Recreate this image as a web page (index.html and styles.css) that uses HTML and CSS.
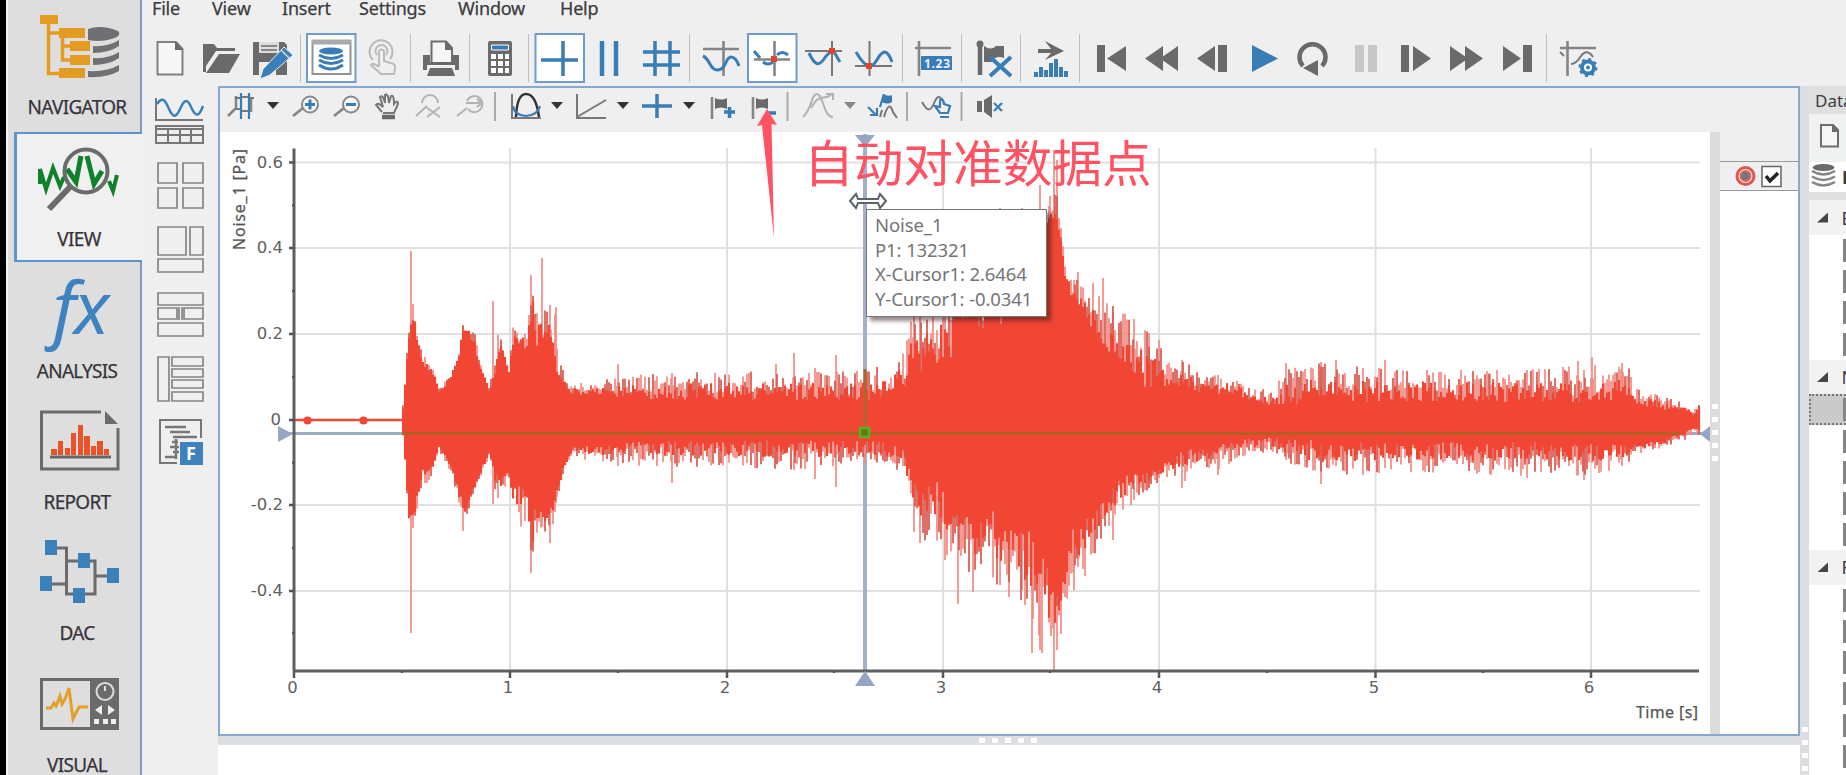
FILE: index.html
```html
<!DOCTYPE html>
<html lang="en">
<head>
<meta charset="utf-8">
<title>Signal viewer</title>
<link rel="stylesheet" href="styles.css">
</head>
<body>
<div class="app">
<nav class="sidebar">
  <div class="nav nav-first"><svg width="132" height="90" viewBox="8 0 132 90"><g fill="#e39b22"><path d="M40 15h18v9H40zM59 28h26v10H59zM70 41h20v10H70zM70 55h20v10H70zM59 68h26v10H59z"/></g><g fill="none" stroke="#e39b22" stroke-width="3.5"><path d="M48.500 20V73.500H60M48.500 33H60M62.500 36V60H72M62.500 46H72"/></g><path fill="#6f7073" d="M88 29Q102 24 118 31Q121 34 117 37Q103 43 88 40ZM93 46Q108 47 119 40V46Q109 53 93 53ZM93 58Q108 59 119 52V58Q109 65 93 65ZM88 71Q107 72 119 65V71Q107 78 88 77Z"/></svg><span class="nav-label">NAVIGATOR</span></div>
  <div class="nav nav-active"><svg width="124" height="88" viewBox="16 133 124 88"><path d="M41 183V168L47 188L54 167L61 185L65 176M110 180L114 190L118 174" fill="none" stroke="#10812b" stroke-width="4"/><path d="M68 168L77 181L82 155M88 155L95 183L103 170" fill="none" stroke="#10812b" stroke-width="5"/><circle cx="87" cy="170" r="21.500" fill="none" stroke="#6b6b6b" stroke-width="4"/><path d="M71 186L50 208" stroke="#6b6b6b" stroke-width="6"/></svg><span class="nav-label">VIEW</span></div>
  <div class="nav"><div class="fx">fx</div><span class="nav-label">ANALYSIS</span></div>
  <div class="nav"><svg width="132" height="91" viewBox="8 395 132 91"><path d="M101 413H41.500V470H118V429" fill="none" stroke="#6b6b6b" stroke-width="3"/><path d="M105 412L118 425H105Z" fill="#6b6b6b"/><path fill="#ec5129" d="M51 450h6v6h-6zM58 442h5v14h-5zM65 449h5v7h-5zM71 434h5v22h-5zM78 426h5v30h-5zM84 437h6v19h-6zM91 447h5v9h-5zM97 442h6v14h-6zM104 450h5v6h-5z"/><path d="M50 458H111" stroke="#666" stroke-width="3"/></svg><span class="nav-label">REPORT</span></div>
  <div class="nav"><svg width="132" height="91" viewBox="8 527 132 91"><g fill="none" stroke="#6b6b6b" stroke-width="3"><path d="M52 550H66.500V596H95V563H66M45 586H66M95 578H113"/></g><path fill="#3a80bb" d="M45 542h12v15H45zM40 578h12v15H40zM78 555h12v15H78zM73 590h12v15H73zM107 570h12v15h-12z"/></svg><span class="nav-label">DAC</span></div>
  <div class="nav"><svg width="132" height="91" viewBox="8 658 132 91"><rect x="41.500" y="680.500" width="76" height="49" fill="none" stroke="#6b6b6b" stroke-width="3"/><path d="M90 679h29v52H90z" fill="#6b6b6b"/><path d="M46 709H51L54 704L56 707L60 697L62 705L65 700L69 689L73 720L79 708H88" fill="none" stroke="#e3a02b" stroke-width="3"/><circle cx="105" cy="692.500" r="8.500" fill="none" stroke="#ddd" stroke-width="2"/><path d="M105 687V692" stroke="#ddd" stroke-width="2"/><path fill="#eee" d="M102 706v10l-7-5zM108 706v10l7-5zM94 720h5v5h-5zM103 720h5v5h-5zM111 720h5v5h-5z"/></svg><span class="nav-label">VISUAL</span></div>
</nav>
<main class="main">
  <header class="menu"><span class="m-file">File</span><span class="m-view">View</span><span class="m-insert">Insert</span><span class="m-settings">Settings</span><span class="m-window">Window</span><span>Help</span></header>
  <div class="toolbar">
    <svg width="50" height="54" viewBox="145 32 50 54"><path d="M157.500 42H176L182.500 49V74.500H157.500Z" class="l"/><path d="M175 41V50H183Z" class="d"/></svg>
    <svg width="50" height="54" viewBox="195 32 50 54"><path class="d" d="M203 44H214L217 48H235V51H216L206 66V72H203ZM219 54H240L229 73H206Z"/></svg>
    <svg width="55" height="54" viewBox="245 32 55 54"><path class="d" d="M253 42H284L287 45V75H253Z"/><path fill="#ddd" d="M259 42h20v11H259z"/><path d="M261 46H277M261 50H277" stroke="#888" stroke-width="2"/><path fill="#eee" d="M259 62h17v13h-17z"/><path fill="#3a7fb9" stroke="#eee" d="M284 47L293 55L270 75L260 79L263 69Z"/><path d="M281 50L289 58" stroke="#dde" stroke-width="1.500"/></svg>
    <i class="sep"></i>
    <svg width="60" height="54" viewBox="301 32 60 54"><rect x="307" y="34" width="48.500" height="48" class="box"/><rect x="312.500" y="41" width="38" height="33" fill="none" stroke="#929292" stroke-width="2"/><path d="M312 42H351" stroke="#aaa" stroke-width="5"/><ellipse cx="331" cy="51" rx="12" ry="3.500" fill="#397db7"/><path fill="none" stroke="#397db7" stroke-width="3" d="M319 55Q331 62 343 55M319 60Q331 67 343 60M319 65Q331 73 343 65"/></svg>
    <svg width="49" height="54" viewBox="361 32 49 54"><g fill="none" stroke="#bbb" stroke-width="2"><path d="M373 60A11.500 11.500 0 1 1 390 59M377 55A6 6 0 1 1 386 55M379 67V51Q381 48 384 51V61L394 64Q396 67 394 74H381L371 65Q373 62 379 67"/></g></svg>
    <i class="sep"></i>
    <svg width="58" height="54" viewBox="411 32 58 54"><path class="d" d="M423 55H430V62H452V55H459V70H455V65H427V70H423ZM430 68H452L455 76H427Z"/><path d="M431.500 62V41.500H446L452 48V62" class="l2"/><path d="M445 41V50H453Z" class="d"/></svg>
    <i class="sep"></i>
    <svg width="58" height="54" viewBox="470 32 58 54"><rect x="488" y="41" width="24" height="35" rx="2" class="d"/><path fill="#397db7" stroke="#fff" d="M491.500 45h17v5h-17z"/><path fill="#fff" d="M491 54h5v5h-5zM498 54h5v5h-5zM505 54h4v5h-4zM491 61h5v5h-5zM498 61h5v5h-5zM505 61h4v5h-4zM491 68h5v5h-5zM498 68h5v5h-5zM505 68h4v5h-4z"/></svg>
    <i class="sep"></i>
    <svg width="60" height="54" viewBox="529 32 60 54"><rect x="535.500" y="34" width="48.500" height="48" class="box"/><path class="b4" d="M541 60H578M563 41V76"/></svg>
    <svg width="41" height="54" viewBox="589 32 41 54"><path class="b5" d="M602 41V76M616 41V76"/></svg>
    <svg width="59" height="54" viewBox="630 32 59 54"><path class="b4" d="M655 41V76M670 41V76M643 52H680M643 65H680"/></svg>
    <i class="sep"></i>
    <svg width="55" height="54" viewBox="690 32 55 54"><path class="g3" d="M703 49H739M723.500 41V76"/><path class="b3" d="M703 56C710 59 710 70 717 70C727 70 725 57 731 57Q736 57 739 66"/></svg>
    <svg width="56" height="54" viewBox="745 32 56 54"><rect x="748" y="34" width="48.500" height="48" class="box"/><path class="g3" d="M754 59.500H790M774.500 41V76"/><path class="b3" d="M754 51L760 58M763 62Q768 66 773 62M777 55Q782 50 788 55"/><path d="M771 56h6v6h-6z" fill="#df442c"/></svg>
    <svg width="50" height="54" viewBox="801 32 50 54"><path class="g2" d="M805 51H842M832 41V76"/><path class="b3" d="M809 53C815 66 819 66 824 59C828 53 833 48 837 57L840 62"/><path d="M829 48h6v6h-6z" fill="#df442c"/></svg>
    <svg width="51" height="54" viewBox="851 32 51 54"><path class="g2" d="M855 66H892M869.500 41V76"/><path class="b3" d="M856 52Q864 66 870 66C877 66 878 52 885 52Q889 53 892 62"/><path d="M866 63h6v6h-6z" fill="#df442c"/></svg>
    <i class="sep"></i>
    <svg width="58" height="54" viewBox="903 32 58 54"><path class="g3" d="M915 48H951M919 41V76"/><path d="M921 56h31v14h-31z" fill="#397db7"/><text x="924" y="67.500" fill="#eef" font-size="12" font-weight="bold" textLength="26">1.23</text></svg>
    <i class="sep"></i>
    <svg width="58" height="54" viewBox="962 32 58 54"><path class="g4" d="M980 42V75"/><circle cx="980" cy="44" r="3.500" class="d"/><path class="d" d="M984 46Q991 51 996 46H1004V58Q995 55 992 62H984Z"/><path d="M990 57L1011 76M1011 57L990 76" stroke="#397db7" stroke-width="4"/></svg>
    <i class="sep"></i>
    <svg width="58" height="54" viewBox="1021 32 58 54"><path class="d" d="M1038 49H1051L1045 41L1064 51L1045 60L1051 53H1038Z"/><path class="b" d="M1034 72h4v5h-4zM1039 67h4v10h-4zM1044 70h4v7h-4zM1049 63h4v14h-4zM1054 59h4v18h-4zM1059 67h4v10h-4zM1064 71h4v6h-4z"/></svg>
    <i class="sep"></i>
    <svg width="55" height="54" viewBox="1080 32 55 54"><path class="d" d="M1097 45h8v27h-8zM1126 46v25l-19-12.500z"/></svg>
    <svg width="52" height="54" viewBox="1135 32 52 54"><path class="d" d="M1163 46v25l-18-12.500zM1178 46v25l-18-12.500z"/></svg>
    <svg width="51" height="54" viewBox="1187 32 51 54"><path class="d" d="M1215 46v25l-18-12.500zM1218 45h9v27h-9z"/></svg>
    <svg width="48" height="54" viewBox="1238 32 48 54"><path class="b" d="M1252 45v27l26-13.500z"/></svg>
    <svg width="54" height="54" viewBox="1286 32 54 54"><path class="g4" d="M1303 66A13 13 0 1 1 1322 66"/><path class="d" d="M1303 68L1318 60V76Z"/></svg>
    <svg width="47" height="54" viewBox="1340 32 47 54"><path fill="#c7c7c7" d="M1355 45h9v27h-9zM1368 45h9v27h-9z"/></svg>
    <svg width="51" height="54" viewBox="1387 32 51 54"><path class="d" d="M1401 45h8v27h-8zM1413 46v25l18-12.500z"/></svg>
    <svg width="54" height="54" viewBox="1438 32 54 54"><path class="d" d="M1450 46v25l18-12.500zM1465 46v25l18-12.500z"/></svg>
    <svg width="54" height="54" viewBox="1492 32 54 54"><path class="d" d="M1503 46v25l18-12.500zM1523 45h9v27h-9z"/></svg>
    <i class="sep"></i>
    <svg width="60" height="54" viewBox="1547 32 60 54"><path class="g3" d="M1560 48H1596M1567.500 41V76"/><path class="g2" d="M1560 52L1564 56M1571 64Q1576 64 1581 56Q1587 48 1593 57"/><circle cx="1588" cy="67.500" r="6" fill="#fff" stroke="#397db7" stroke-width="4"/><circle cx="1588" cy="67.500" r="8.500" fill="none" stroke="#397db7" stroke-width="2" stroke-dasharray="3 3.670"/><circle cx="1588" cy="67.500" r="2" class="b"/></svg>
  </div>
  <div class="work">
    <div class="rail">
      <svg width="76" height="390" viewBox="142 86 76 390"><path d="M156 98V120H203" class="g2"/><path d="M157 104C163 95 166 102 169 109C174 120 177 116 181 107C186 96 189 102 192 109C197 119 200 114 203 106" fill="none" stroke="#3a80ba" stroke-width="2.500"/><path class="g2" d="M156 126H203V143H156ZM156 129H203M156 135H203M168 129V143M180 129V143M191 129V143"/>
      <g fill="none" stroke="#858585" stroke-width="1.700"><path d="M158 163h19v20h-19zM183 163h20v20h-20zM158 188h19v20h-19zM183 188h20v20h-20zM158 227h28v28h-28zM190 227h13v28h-13zM158 259h45v13h-45zM158 293h45v12h-45zM158 308h19v11h-19zM184 308h19v11h-19zM158 323h45v13h-45zM158 357h11v44h-11zM172 357h31v9h-31zM172 369h31v8h-31zM172 380h31v8h-31zM172 392h31v9h-31zM179 307v13M182 307v13"/></g>
      <path d="M201 438V420H160V463H177" class="g2"/><path d="M165 427H186M170 432H190M173 437H197M172 442H178M170 447H179M173 452H179M165 457H177M176 439V459" stroke="#777" stroke-width="2.500"/><path d="M180 442h23v23h-23z" fill="#3d82bb"/><text x="186" y="460" fill="#fff" font-size="18" font-weight="bold">F</text></svg>
    </div>
    <section class="center">
      <div class="panel">
        <div class="chartbar">
          <svg width="784" height="44" viewBox="220 88 784 44">
            <path class="g3" d="M228 116L235 109M236 96V110M251 97V112"/><path class="b2" d="M241 93V119M249 93V119"/><path class="g2" d="M235 98H240M242 97H248M235 109H240M242 111H248M250 98H254"/>
            <g fill="#333"><path d="M267 102h12l-6 7zM551 102h12l-6 7zM617 102h12l-6 7zM683 102h12l-6 7z"/><path fill="#888" d="M844 102h12l-6 7z"/></g>
            <g class="z"><path class="g3" d="M293 116L303 108"/><circle cx="310" cy="104.500" r="8"/><path class="b3" d="M305 104.500H315M310 99.500V109.500"/><path class="g3" d="M334 116L344 108"/><circle cx="351" cy="104.500" r="8"/><path class="b3" d="M346 104.500H356"/></g>
            <path class="g2" d="M382 112L376 105Q378 102 383 107L380 97Q383 94 385 103V95Q388 92 389 103L391 96Q394 94 394 104Q398 99 398 104L394 113H383"/><path class="g4" d="M382 117H395"/>
            <g fill="none" stroke="#b3b3b3" stroke-width="2"><path d="M416 116L427 106M422 103A8 8 0 1 1 438 103M427 108L440 117M440 107L427 117M457 116L467 108M467 101A8 8 0 1 1 468 109M466 103H481M477 99L482 103L477 107"/></g>
            <path d="M495 92V121M787.500 92V121M907 92V121M961.500 92V121" stroke="#aaa" stroke-width="2"/>
            <path class="g2" d="M512 94V118H541"/><path d="M516 117Q517 94 526 94Q536 94 539 117" fill="none" stroke="#333" stroke-width="2.500"/><path class="b2" d="M513 106Q514 115 526 116Q538 115 540 106"/>
            <path class="g2" d="M577 94V118H606M577 117L606 100"/><path class="b4" d="M642 106H672M657 94V118"/>
            <path class="g3" d="M712 97V119M753 97V119"/><path class="d" d="M715 98Q721 101 727 98V109Q721 106 715 109zM756 98Q762 101 768 98V109Q762 106 756 109z"/><path class="b4" d="M724 112H735M729.500 107V118M768 113H776"/>
            <path fill="none" stroke="#b2b2b2" stroke-width="2" d="M803 117C812 109 811 94 817 94S824 118 833 117M811 108C820 92 823 101 831 95M826 94H833V100"/>
            <path class="b2" d="M868 107L876 115M870 115H877V108M880 107L884 94"/><path class="b" d="M883 94Q888 97 892 95V102Q888 105 882 102Z"/><path class="g2" d="M880 117L882 110M884 117Q889 99 893 112L897 118"/>
            <path class="g2" d="M922 102C928 113 931 111 935 101C938 94 941 97 944 103"/><path class="b2" d="M940 113L935 106L940 107V100Q943 97 944 104L950 106L948 113ZM940 117H949"/>
            <path class="d" d="M977 101h5v11h-5zM984 100L992 95V118L984 112Z"/><path class="b2" d="M994 103L1002 111M1002 103L994 111"/>
          </svg>
        </div>
        <div class="plotrow">
          <svg id="plot" class="plot" width="1490" height="602" viewBox="220 132 1490 602">
            <path class="grid" d="M294 162.500H1700M294 248H1700M294 334H1700M294 420H1700M294 505H1700M294 591H1700M510 148V671M727 148V671M943 148V671M1159 148V671M1375.500 148V671M1591 148V671"/>
            <path class="vcur" d="M865 134V671"/>
            <path class="hcur" d="M280 433.500H1702"/>
            <path id="spikes" class="spikes"/><path id="edges" class="edges"/><path id="core" class="core"/>
            <path d="M294 420H403" stroke="#ed4a3a" stroke-width="2.500"/><circle cx="307.500" cy="420.500" r="4" class="core"/><circle cx="363.500" cy="420.500" r="4" class="core"/>
            <path d="M402 433.500H1680" stroke="#b36023" stroke-width="3"/><path d="M865 369V433" stroke="#a86a2c" stroke-width="3"/>
            <path class="axis" d="M294 148.500V671M293 671H1699"/>
            <path class="tick" d="M289 162.500H295M289 248H295M289 334H295M289 420H295M289 505H295M289 591H295M292 205.500H295M292 291H295M292 377H295M292 462.500H295M292 548H295M292 633H295M294 671V678M510 671V678M727 671V678M943 671V678M1159 671V678M1375.500 671V678M1591 671V678M402 671V673M618 671V673M834 671V673M1050 671V673M1267 671V673M1483 671V673"/>
            <g class="mark"><path d="M855 135h20l-10 12zM855 686h20l-10-15zM278 426v16l15-8zM1710 426v16l-10-8z"/></g>
            <rect x="860" y="428" width="9" height="9" fill="#5b7c18" stroke="#5fae20" stroke-width="2.500"/>
            <g class="lbl" text-anchor="end"><text x="283" y="167.500">0.6</text><text x="283" y="253">0.4</text><text x="283" y="339">0.2</text><text x="281" y="425">0</text><text x="283" y="510">-0.2</text><text x="283" y="596">-0.4</text></g>
            <g class="lbl" text-anchor="middle"><text x="292.500" y="693">0</text><text x="508" y="693">1</text><text x="725" y="693">2</text><text x="941" y="693">3</text><text x="1157" y="693">4</text><text x="1374" y="693">5</text><text x="1589" y="693">6</text></g>
            <text class="ax" x="1636" y="718" textLength="62">Time [s]</text>
            <text class="ax" transform="translate(245 250) rotate(-90)" textLength="101">Noise_1 [Pa]</text>
          </svg>
          <div class="vsplit"><b></b><b></b><b></b><b></b><b></b></div>
          <div class="legend"><div class="legend-row"><svg width="77" height="28" viewBox="1720 162 77 28"><circle cx="1745.500" cy="176" r="8.500" fill="none" stroke="#e2554c" stroke-width="3"/><circle cx="1745.500" cy="176" r="5" fill="#777" stroke="#e2655c" stroke-width="2"/><rect x="1762" y="166.500" width="19" height="20" fill="#fff" stroke="#666" stroke-width="1.500"/><path d="M1766 176L1770 181L1778 173" fill="none" stroke="#222" stroke-width="3.500"/></svg></div></div>
        </div>
      </div>
      <div class="hsplit"><b></b><b></b><b></b><b></b><b></b></div>
    </section>
    <aside class="data">
      <div class="dsplit"><b></b><b></b><b></b><b></b></div>
      <div class="dlist">
        <div class="dhead">Data</div>
        <div class="dtool"><svg width="37" height="47" viewBox="1809 114 37 47"><path class="l2" d="M1821 125H1833L1838 130V146.500H1821Z"/><path class="d" d="M1832 124V132H1839Z"/></svg></div>
        <div class="ddb"><svg width="31" height="30" viewBox="1809 162 31 30"><ellipse cx="1823.500" cy="167.500" rx="11" ry="3.500" class="d"/><path class="g3" d="M1812 171Q1823.500 178 1835 171M1812 176.500Q1823.500 183.500 1835 176.500M1812 182Q1823.500 189 1835 182"/></svg><strong>B</strong></div>
        <div class="dgroup"><i></i><span>E</span></div>
        <div class="drow"><i></i></div><div class="drow"><i></i></div><div class="drow"><i></i></div><div class="drow"><i></i></div>
        <div class="dgroup"><i></i><span>N</span></div>
        <div class="drow drow-sel"><i></i></div><div class="drow"><i></i></div><div class="drow"><i></i></div><div class="drow"><i></i></div><div class="drow"><i></i></div>
        <div class="dgroup"><i></i><span>F</span></div>
        <div class="drow"><i></i></div><div class="drow"><i></i></div><div class="drow"><i></i></div><div class="drow"><i></i></div><div class="drow"><i></i></div><div class="drow"><i></i></div><div class="drow"><i></i></div>
      </div>
    </aside>
  </div>
</main>
<div class="tip"><div>Noise_1</div><div>P1: 132321</div><div>X-Cursor1: 2.6464</div><div>Y-Cursor1: -0.0341</div></div>
<svg class="resize" width="42" height="20" viewBox="0 0 42 20"><path d="M3 10L9 3L11 8H31L33 3L39 10L33 17L31 12H11L9 17Z" fill="#fff" stroke="#5d636b" stroke-width="2"/></svg>
<svg class="arrow" width="24" height="130" viewBox="755 109 24 130"><path d="M767 109L777 125L771.500 124L774 238L762 125L757 126Z" fill="#ff5263"/></svg>
<div class="note">自动对准数据点</div>
</div>
<script src="wave.js"></script>
</body>
</html>
```

FILE: styles.css
```css
* { box-sizing: border-box; }
body { margin: 0; width: 1846px; height: 775px; overflow: hidden; background: #efefef; font-family: "Noto Sans", "Open Sans", sans-serif; color: #3b3b40; }
svg { display: block; flex: none; }
.app { position: relative; display: flex; width: 1846px; height: 775px; border-left: 6px solid #000; overflow: hidden; }
.sidebar { width: 136px; flex: none; background: #dedede; border-left: 2px solid #f4f4f4; border-right: 2px solid #7b9cc4; }
.nav { height: 131.6px; display: flex; flex-direction: column; align-items: center; }
.nav-first { height: 132px; }
.nav-active { position: relative; width: 128px; margin: 0 -2px 0 6px; height: 130px; background: #f0f0f0; border: 2px solid #5b95c9; border-left-width: 3px; border-right: 0; padding-right: 6px; }
.nav-label { font-size: 19px; line-height: 28px; letter-spacing: -.7px; padding-top: 3px; margin-left: 6px; color: #37333b; -webkit-text-stroke: .25px #37333b; }
.nav-active .nav-label { margin-left: 5px; }
.fx { height: 92px; line-height: 88px; font-size: 73px; font-style: italic; letter-spacing: -2px; color: #3e83bf; padding-left: 12px; }
.main { flex: 1; min-width: 0; }
.menu { height: 32px; padding-left: 10px; display: flex; font-size: 18px; line-height: 17px; letter-spacing: -.2px; -webkit-text-stroke: .25px #3b3b40; }
.m-file { width: 60px; }
.m-view { width: 70px; }
.m-insert { width: 77px; }
.m-settings { width: 99px; }
.m-window { width: 102px; }
.toolbar { height: 54px; display: flex; padding-left: 3px; }
.sep { width: 1px; height: 48px; margin-top: 2px; background: #bdbdbd; flex: none; }
.d { fill: #686a6c; }
.b { fill: #397db7; }
.l { fill: #f6f6f6; stroke: #808080; stroke-width: 2; }
.l2 { fill: #f6f6f6; stroke: #6d6d6d; stroke-width: 2; }
.box { fill: #fff; stroke: #6c9dcd; stroke-width: 2; }
.g2, .g3, .g4, .b2, .b3, .b4, .b5 { fill: none; }
.g2, .g3, .g4 { stroke: #777; stroke-width: 2; }
.g3 { stroke-width: 2.600; stroke: #858585; }
.g4 { stroke-width: 4.500; stroke: #686a6c; }
.b2, .b3, .b4, .b5 { stroke: #397db7; stroke-width: 2.200; }
.b3 { stroke-width: 3; }
.b4 { stroke-width: 3.500; }
.b5 { stroke-width: 4.500; }
.z circle { fill: #f8f8f8; stroke: #888; stroke-width: 2; }
.work { display: flex; height: 689px; }
.rail { width: 76px; flex: none; }
.center { width: 1582px; flex: none; background: #fff; }
.panel { height: 650px; border: 2px solid #86a9cf; }
.chartbar { height: 44px; background: #efefef; }
.plotrow { display: flex; height: 602px; }
.plot { background: #fff; }
.vsplit { width: 10px; flex: none; background: #dcdcdc; display: flex; flex-direction: column; align-items: center; padding-top: 272px; gap: 8px; }
.vsplit b, .hsplit b, .dsplit b { width: 6px; height: 5px; flex: none; background: #fff; }
.legend { flex: 1; background: #fff; }
.legend-row { border-top: 29px solid #efefef; background: #efefef; box-shadow: inset 0 1px #999, 0 1px #999; height: 58px; padding-top: 1px; }
.hsplit { height: 9px; background: #dcdedf; display: flex; justify-content: flex-start; align-items: center; gap: 7px; padding-left: 761px; }
.grid { fill: none; stroke: #e0e0e0; stroke-width: 2; }
.vcur { stroke: #a3afcb; stroke-width: 4; }
.hcur { stroke: #9cabbe; stroke-width: 3; }
.axis { fill: none; stroke: #606060; stroke-width: 3; }
.tick { fill: none; stroke: #555; stroke-width: 2.500; }
.mark { fill: #97a5c5; }
.spikes { fill: none; stroke: #f28a82; stroke-width: 1.700; }
.edges { fill: none; stroke: #d8574c; stroke-width: 1.700; }
.core { fill: #f24634; }
.lbl { font-family: "DejaVu Sans", sans-serif; font-size: 16.500px; fill: #606060; }
.ax { font-size: 16px; fill: #555; stroke: #555; stroke-width: .25px; }
.data { flex: 1; min-width: 0; display: flex; overflow: hidden; }
.dsplit { width: 9px; flex: none; background: #dcdde1; display: flex; flex-direction: column; align-items: center; padding-top: 641px; gap: 8px; }
.dlist { width: 37px; background: #fff; overflow: hidden; }
.dhead { height: 28px; background: #dfdfdf; padding-left: 6px; font-size: 17px; line-height: 30px; white-space: nowrap; }
.dtool { height: 48px; background: #f0f1f1; }
.ddb { height: 30px; display: flex; font-size: 18px; line-height: 30px; }
.ddb strong { margin-left: 2px; }
.dgroup { height: 34.500px; background: #f2f2f2; display: flex; align-items: center; font-size: 18px; }
.ddb + .dgroup { box-shadow: 0 -8px #dfdfdf; height: 35px; margin-top: 8px; }
.dgroup i { width: 11px; height: 10px; margin: 0 13.500px 0 8px; background: #444; clip-path: polygon(100% 0, 100% 100%, 0 100%); flex: none; }
.drow { height: 31.200px; display: flex; align-items: center; padding-left: 34px; }
.drow i { width: 3px; height: 23px; flex: none; background: #858585; }
.drow-sel { background: #cacaca; border: 2px dotted #777; border-right: 0; padding-left: 32px; }
.tip { position: absolute; left: 860px; top: 209px; width: 181px; height: 108px; padding: 3px 0 0 8px; background: #fff; border: 1.500px solid #777; box-shadow: 4px 4px 4px rgba(50, 20, 20, .5); font-size: 18.500px; line-height: 24.600px; letter-spacing: -.1px; color: #747474; white-space: nowrap; }
.resize { position: absolute; left: 841px; top: 191px; }
.arrow { position: absolute; left: 749px; top: 109px; }
.note { position: absolute; left: 798px; top: 124px; font: 400 49.700px/72px "Noto Sans CJK SC", sans-serif; color: #ff5263; white-space: nowrap; }
```

FILE: wave.js
```javascript
// Envelope anchors: x, inner top, peak top, inner bottom, peak bottom.
const env = [
  [402, 408, 404, 433, 436], [405, 375, 365, 470, 480], [408, 340, 316, 515, 524], [413, 316, 310, 515, 524],
  [416, 340, 332, 495, 512], [422, 368, 356, 467, 482], [427, 368, 358, 464, 484], [433, 375, 372, 462, 468], [438, 393, 386, 447, 452],
  [450, 378, 374, 465, 472], [457, 360, 350, 488, 500], [462, 330, 324, 505, 515], [466, 334, 320, 506, 520],
  [473, 340, 328, 487, 495], [479, 368, 362, 472, 480], [488, 391, 385, 453, 458], [494, 373, 360, 470, 495],
  [500, 348, 335, 480, 495], [508, 377, 366, 473, 478], [512, 342, 324, 485, 520], [520, 345, 330, 495, 530],
  [526, 348, 330, 492, 520], [531, 315, 275, 530, 570], [535, 340, 305, 508, 538], [541, 336, 295, 512, 528],
  [548, 340, 310, 518, 536], [554, 350, 306, 500, 525], [558, 381, 360, 483, 492], [564, 383, 371, 462, 470],
  [570, 393, 384, 449, 459], [640, 395, 374, 446, 466], [720, 395, 371, 445, 468], [800, 395, 372, 446, 471],
  [865, 395, 370, 445, 464], [890, 392, 360, 446, 467], [903, 386, 350, 453, 475], [910, 360, 320, 478, 510],
  [922, 362, 312, 500, 543], [935, 355, 300, 490, 540], [945, 350, 285, 500, 555], [960, 335, 270, 508, 570],
  [973, 326, 250, 530, 580], [985, 320, 230, 510, 575], [1000, 310, 230, 535, 590], [1015, 295, 215, 535, 594],
  [1030, 260, 215, 550, 630], [1040, 238, 215, 570, 648], [1050, 218, 197, 590, 650], [1055, 214, 180, 609, 652],
  [1059, 228, 207, 593, 648], [1064, 280, 266, 585, 612], [1070, 293, 278, 532, 575], [1080, 312, 278, 528, 580],
  [1090, 322, 290, 515, 562], [1105, 340, 290, 500, 530], [1120, 355, 312, 482, 515], [1135, 374, 318, 472, 500],
  [1155, 380, 339, 472, 485], [1170, 385, 365, 461, 475], [1185, 380, 358, 454, 482], [1200, 392, 377, 450, 468],
  [1220, 391, 374, 449, 471], [1238, 392, 376, 444, 458], [1250, 402, 389, 441, 454], [1275, 401, 382, 440, 454],
  [1290, 398, 366, 445, 468], [1325, 396, 363, 446, 478], [1400, 396, 368, 448, 472], [1500, 396, 369, 448, 476],
  [1590, 396, 365, 448, 476], [1628, 394, 367, 447, 466], [1636, 402, 388, 446, 455], [1660, 407, 396, 441, 448],
  [1685, 410, 403, 433, 440], [1692, 415, 409, 429, 433], [1699, 408, 403, 430, 437]
];
// Isolated peaks: x, top, bottom.
const peaks = [
  [411, 251, 633], [413, 304, 528], [425, 357, 483], [463, 325, 531], [493, 301, 504], [498, 335, 498], [531, 275, 573],
  [542, 258, 527], [550, 305, 543], [556, 307, 503], [618, 364, 466], [672, 373, 483], [776, 364, 464],
  [794, 353, 470], [815, 368, 479], [836, 355, 487], [914, 300, 532], [920, 300, 543], [945, 280, 560],
  [958, 270, 604], [973, 260, 592], [1000, 208, 585], [1009, 230, 597], [1022, 208, 590], [1032, 220, 653],
  [1040, 185, 650], [1042, 220, 653], [1050, 196, 600], [1054, 150, 671], [1057, 160, 650], [1061, 228, 634],
  [1074, 280, 590], [1078, 272, 567], [1085, 301, 576], [1093, 283, 553], [1103, 278, 519], [1113, 312, 540],
  [1123, 314, 504], [1134, 319, 500], [1149, 333, 475], [1159, 340, 478], [1182, 360, 488], [1218, 375, 475],
  [1286, 363, 460], [1321, 362, 484], [1336, 360, 466], [1363, 368, 475], [1385, 360, 468], [1427, 370, 466],
  [1490, 374, 474], [1527, 370, 478], [1578, 361, 475], [1592, 357, 463], [1584, 370, 480], [1622, 363, 466]
];
let seed = 4711;
const rnd = () => (seed = (seed * 16807) % 2147483647) / 2147483647;
let k = 0;
let core = "", spikes = "", edges = "";
for (let x = 402; x <= 1698; x += 2) {
  while (k < env.length - 2 && env[k + 1][0] <= x) k++;
  const a = env[k], b = env[k + 1], t = (x - a[0]) / (b[0] - a[0]);
  const v = i => a[i] + (b[i] - a[i]) * t;
  const top = v(1) - (rnd() - .3) * (v(1) - v(2)) * .75;
  const bot = v(3) + (rnd() - .3) * (v(4) - v(3)) * .75;
  core += `M${x} ${top.toFixed(1)}h2.1V${bot.toFixed(1)}h-2.1Z`;
  const line = `M${x + 1} ${(v(1) - Math.pow(rnd(), .9) * (v(1) - v(2))).toFixed(1)}V${(v(3) + Math.pow(rnd(), .9) * (v(4) - v(3))).toFixed(1)}`;
  if (rnd() < .55) spikes += line; else edges += line;
}
peaks.forEach(([x, y1, y2]) => { spikes += `M${x} ${y1}V${y2}`; });
document.getElementById("core").setAttribute("d", core);
document.getElementById("spikes").setAttribute("d", spikes);
document.getElementById("edges").setAttribute("d", edges);
```
